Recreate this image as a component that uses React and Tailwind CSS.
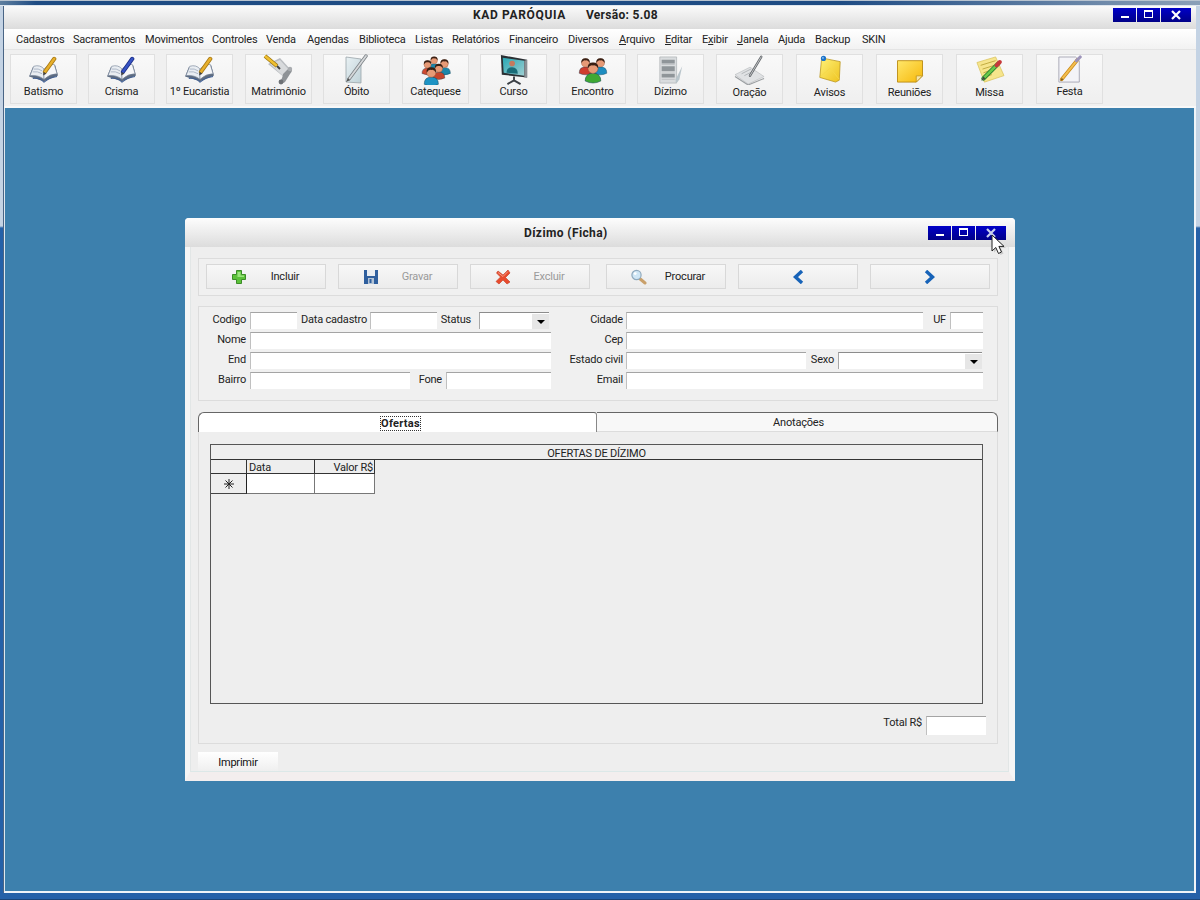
import React from "react";

const FONT = "font-['Roboto','Liberation_Sans',sans-serif]";

const Book = ({ pen = "#e8b02c", dark = "#a87a16" }) => (
  <svg width="34" height="28" viewBox="0 0 34 30">
    <path d="M1 22 L5 12 L17 15 L29 10 L32 21 L17 27 Z" fill="#5d6b80" />
    <path d="M2 21 L6 11 Q13 9 17 14 L17 25 Q11 20 2 21 Z" fill="#e9edf2" stroke="#78859a" strokeWidth=".7" />
    <path d="M17 14 Q21 9 28 9 L31 19 Q23 19 17 25 Z" fill="#f6f7f9" stroke="#78859a" strokeWidth=".7" />
    <path d="M6 14 Q11 13 15 16 M5 17 Q10 16 15 19" stroke="#a9b4c4" strokeWidth="1" fill="none" />
    <path d="M18 17 L28 3" stroke={dark} strokeWidth="4.4" strokeLinecap="round" />
    <path d="M18 17 L28 3" stroke={pen} strokeWidth="2.6" strokeLinecap="round" />
    <path d="M16 21 L16.6 17 L19.6 19 Z" fill="#444" />
    <path d="M5 24 Q12 23 17 28 Q23 23 31 22" stroke="#3f5e92" strokeWidth="1.2" fill="none" />
  </svg>
);

const Scroll = () => (
  <svg width="32" height="32" viewBox="0 0 32 32">
    <path d="M5 10 L17 4 L28 16 L22 24 Z" fill="#b9bcc0" />
    <path d="M7 10 L17 6 L26 16 L20 22 Z" fill="#d8dadc" />
    <path d="M20 20 L27 13 Q31 16 27 20 L22 28 Q18 31 16 27 Q19 27 20 20 Z" fill="#8f9397" />
    <circle cx="18" cy="28" r="2.4" fill="#6d7175" />
    <circle cx="27" cy="15" r="2.2" fill="#a9acb0" />
    <path d="M2 2 L14 12" stroke="#9a7410" strokeWidth="4" />
    <path d="M2 2 L14 12" stroke="#f0c030" strokeWidth="2.4" />
    <path d="M14 12 L17 15" stroke="#444" strokeWidth="2" />
  </svg>
);

const Obito = () => (
  <svg width="30" height="32" viewBox="0 0 30 32">
    <defs>
      <linearGradient id="ob" x1="0" y1="0" x2="1" y2="1">
        <stop offset="0" stopColor="#e9f1f4" />
        <stop offset="1" stopColor="#bfd2d8" />
      </linearGradient>
    </defs>
    <path d="M4 3 L19 5 L19 29 L4 28 Z" fill="url(#ob)" stroke="#9aa5aa" strokeWidth=".8" />
    <path d="M7 25 L24 2" stroke="#7c8286" strokeWidth="3.4" strokeLinecap="round" />
    <path d="M7 25 L24 2" stroke="#d5d8da" strokeWidth="1.8" strokeLinecap="round" />
    <path d="M4 28 L6 24 L8 26 Z" fill="#555" />
  </svg>
);

const Person = ({ x, y, s = 1, shirt = "#1f8cc0", hair = "#3a2014" }) => (
  <g transform={`translate(${x} ${y}) scale(${s})`}>
    <path d="M-8 17 Q-8 9 0 9 Q8 9 8 17 Q0 21 -8 17 Z" fill={shirt} stroke="#0f3d52" strokeWidth=".5" />
    <circle cx="0" cy="4" r="5.2" fill="#e79a76" stroke="#7a4026" strokeWidth=".4" />
    <path d="M-5.2 4 Q-6 -2 0 -2 Q6 -2 5.2 4 Q3 0 0 1 Q-3 0 -5.2 4 Z" fill={hair} />
  </g>
);

const Catequese = () => (
  <svg width="32" height="30" viewBox="0 0 34 32">
    <Person x={15} y={3} s={0.7} shirt="#1c86aa" />
    <Person x={26} y={6} s={0.8} shirt="#1c86aa" />
    <Person x={8} y={7} s={0.75} shirt="#cf4a30" />
    <Person x={20} y={11} s={0.8} shirt="#c4452c" />
    <Person x={12} y={15} s={0.95} shirt="#1d93c4" />
  </svg>
);

const Curso = () => (
  <svg width="32" height="30" viewBox="0 0 32 32">
    <defs>
      <linearGradient id="cu" x1="0" y1="0" x2="1" y2="1">
        <stop offset="0" stopColor="#2aa8b4" />
        <stop offset="1" stopColor="#9ecfd2" />
      </linearGradient>
    </defs>
    <path d="M2 0 L30 5 L30 24 L3 21 Z" fill="#2b2f33" />
    <path d="M4 3 L27 6 L27 22 L5 19 Z" fill="url(#cu)" />
    <circle cx="14" cy="9" r="3" fill="#c67a5e" />
    <path d="M8 19 Q8 13 14 13 Q20 13 20 20 Z" fill="#1a6c78" />
    <path d="M16 23 L16 27 M16 27 L9 31 M16 27 L23 31" stroke="#3b3f44" strokeWidth="2" fill="none" />
    <path d="M27 6 L30 5 L30 24 L27 24 Z" fill="#8a9095" />
  </svg>
);

const Encontro = () => (
  <svg width="32" height="28" viewBox="0 0 34 30">
    <Person x={9} y={4} s={0.85} shirt="#cf3d2e" />
    <Person x={25} y={4} s={0.85} shirt="#1d8dc0" />
    <Person x={17} y={9} s={1.05} shirt="#3ea833" />
  </svg>
);

const Dizimo = () => (
  <svg width="28" height="30" viewBox="0 0 30 32">
    <path d="M3 2 L21 2 L21 30 L3 30 Z" fill="#d9dcde" stroke="#a9adb0" strokeWidth=".7" />
    <path d="M5 5 H19 V9 H5 Z M5 12 H19 V17 H5 Z M5 20 H19 V24 H5 Z" fill="#8f9599" />
    <path d="M5 10 H19 M5 18 H19 M5 26 H19" stroke="#bcc0c3" strokeWidth="1" />
    <path d="M20 26 L27 12 L24 26 Q22 30 20 30 Z" fill="#b9c5cb" />
  </svg>
);

const Oracao = () => (
  <svg width="32" height="30" viewBox="0 0 34 32">
    <path d="M1 21 L17 13 L32 23 L15 31 Z" fill="#e0e2e4" stroke="#b8bcbf" strokeWidth=".7" />
    <path d="M1 23 L15 32 L32 25" stroke="#9a9ea1" strokeWidth="1.2" fill="none" />
    <path d="M8 20 L18 15 M11 22 L21 17" stroke="#b0b4b7" strokeWidth="1" />
    <path d="M17 22 L29 2" stroke="#63676b" strokeWidth="2.6" strokeLinecap="round" />
    <path d="M17 22 L29 2" stroke="#c7cacc" strokeWidth="1" strokeLinecap="round" />
  </svg>
);

const Avisos = () => (
  <svg width="26" height="30" viewBox="0 0 28 32">
    <defs>
      <linearGradient id="av" x1="0" y1="0" x2="1" y2="1">
        <stop offset="0" stopColor="#fff27a" />
        <stop offset="1" stopColor="#eec21e" />
      </linearGradient>
    </defs>
    <path d="M5 3 L25 7 L24 27 L20 29 L3 24 Z" fill="url(#av)" stroke="#b8921a" strokeWidth=".8" />
    <path d="M4 23 L14 14 L24 26" stroke="#f5d848" strokeWidth="1" fill="none" />
    <circle cx="7" cy="3.5" r="2.8" fill="#1d72c8" />
    <circle cx="6.4" cy="3" r="1" fill="#8cc4f0" />
  </svg>
);

const Reuniones = () => (
  <svg width="28" height="25" viewBox="0 0 30 28">
    <defs>
      <linearGradient id="re" x1="0" y1="0" x2="1" y2="1">
        <stop offset="0" stopColor="#ffe76a" />
        <stop offset="1" stopColor="#f6b80a" />
      </linearGradient>
    </defs>
    <path d="M1 3 H29 V20 L22 27 H1 Z" fill="url(#re)" stroke="#b98a10" strokeWidth="1" />
    <path d="M29 20 H22 V27 Z" fill="#f7e6a8" stroke="#b98a10" strokeWidth=".8" />
  </svg>
);

const Missa = () => (
  <svg width="30" height="28" viewBox="0 0 32 30">
    <path d="M2 7 L22 1 L31 21 L10 28 Z" fill="#f6e58c" stroke="#d9c25c" strokeWidth=".8" />
    <path d="M6 10 L22 5 M8 14 L24 9 M9 18 L20 14 M11 22 L18 20" stroke="#bda83c" strokeWidth="1" />
    <path d="M9 24 L25 8" stroke="#237e2c" strokeWidth="4.6" strokeLinecap="round" />
    <path d="M9 24 L25 8" stroke="#69c94a" strokeWidth="2.8" strokeLinecap="round" />
    <path d="M23 10 L26.5 6.5" stroke="#c7383a" strokeWidth="4.4" strokeLinecap="round" />
    <path d="M6.5 26.5 L9 22 L11 24 Z" fill="#444" />
  </svg>
);

const Festa = () => (
  <svg width="26" height="30" viewBox="0 0 28 30">
    <path d="M2 1 H20 L24 5 V28 H2 Z" fill="#f4f4f8" stroke="#a8a8b4" strokeWidth="1" />
    <path d="M5 25 L22 4" stroke="#c98a18" strokeWidth="3.8" strokeLinecap="round" />
    <path d="M5 25 L22 4" stroke="#f3bd4f" strokeWidth="2.2" strokeLinecap="round" />
    <path d="M21 5 L25 1" stroke="#9d94ba" strokeWidth="3.4" strokeLinecap="round" />
    <path d="M3.5 27 L5 23.5 L7 25 Z" fill="#7a5a20" />
  </svg>
);

const Plus = () => (
  <svg width="16" height="16" viewBox="0 0 16 16">
    <path d="M5.5 1.5 H10.5 V5.5 H14.5 V10.5 H10.5 V14.5 H5.5 V10.5 H1.5 V5.5 H5.5 Z" fill="#5cc23a" stroke="#3c8c28" strokeWidth="1" strokeLinejoin="round" />
    <path d="M6.5 3 H9.5 V6.5 H13 V8 H6.5 Z" fill="#9ae57c" />
  </svg>
);
const Floppy = () => (
  <svg width="14" height="14" viewBox="0 0 14 14">
    <path d="M0 0 H14 V14 H0 Z" fill="#2f5f9e" />
    <path d="M3 0 H11 V6 H3 Z" fill="#e9edf2" />
    <path d="M4 8 H10 V14 H4 Z" fill="#b4c4d6" />
    <path d="M5.5 9 H7.5 V13 H5.5 Z" fill="#2f5f9e" />
  </svg>
);
const RedX = () => (
  <svg width="16" height="16" viewBox="0 0 16 16">
    <path d="M3 2 L8 6 L13 1 L15 4 L10.5 8.5 L15 13 L12 15 L8 11 L4 15 L1 12.5 L5.5 8 L1.5 4 Z" fill="#e94a2c" stroke="#c03a22" strokeWidth=".6" strokeLinejoin="round" />
    <path d="M3 3.5 L8 7.5 L13 2.5" stroke="#f59a84" strokeWidth="1" fill="none" />
  </svg>
);
const Lens = () => (
  <svg width="18" height="16" viewBox="0 0 18 16">
    <path d="M9 9 L15 14" stroke="#c9a06a" strokeWidth="3" strokeLinecap="round" />
    <circle cx="6.5" cy="6" r="4.6" fill="#cfe6f5" stroke="#8fa9bd" strokeWidth="1.2" />
    <circle cx="5.2" cy="4.6" r="1.4" fill="#ffffff" />
  </svg>
);
const Chev = ({ right }) => (
  <svg width="12" height="14" viewBox="0 0 12 14">
    <path d={right ? "M2 1 L8.5 7 L2 13" : "M10 1 L3.5 7 L10 13"} fill="none" stroke="#1763b8" strokeWidth="3.4" />
  </svg>
);
const Star = () => (
  <svg width="10" height="10" viewBox="0 0 10 10">
    <path d="M5 0 V10 M0 5 H10 M1.5 1.5 L8.5 8.5 M8.5 1.5 L1.5 8.5" stroke="#222" strokeWidth="1" />
  </svg>
);

const toolbar = [
  ["Batismo", <Book />, "ml-[6px]", "mt-[1px]"],
  ["Crisma", <Book pen="#3754c4" dark="#1c2f88" />, "ml-[11px]", "mt-[1px]"],
  ["1º Eucaristia", <Book />, "ml-[11px]", "mt-[1px]"],
  ["Matrimônio", <Scroll />, "ml-[12px]", "mt-[1px]"],
  ["Óbito", <Obito />, "ml-[11px]", "mt-[1px]"],
  ["Catequese", <Catequese />, "ml-[12px]", "mt-[1px]"],
  ["Curso", <Curso />, "ml-[11px]", "mt-[1px]"],
  ["Encontro", <Encontro />, "ml-[12px]", "mt-[1px]"],
  ["Dízimo", <Dizimo />, "ml-[11px]", "mt-[1px]"],
  ["Oração", <Oracao />, "ml-[12px]", "mt-[2px]"],
  ["Avisos", <Avisos />, "ml-[13px]", "mt-[2px]"],
  ["Reuniões", <Reuniones />, "ml-[13px]", "mt-[2px]"],
  ["Missa", <Missa />, "ml-[13px]", "mt-[2px]"],
  ["Festa", <Festa />, "ml-[13px]", "mt-[1px]"],
];

const menu = [
  ["Cadastros", "w-[57px]"],
  ["Sacramentos", "w-[72px]"],
  ["Movimentos", "w-[67px]"],
  ["Controles", "w-[54px]"],
  ["Venda", "w-[41px]"],
  ["Agendas", "w-[52px]"],
  ["Biblioteca", "w-[56px]"],
  ["Listas", "w-[37px]"],
  ["Relatórios", "w-[57px]"],
  ["Financeiro", "w-[59px]"],
  ["Diversos", "w-[51px]"],
  [<><u>A</u>rquivo</>, "w-[46px]"],
  [<><u>E</u>ditar</>, "w-[37px]"],
  [<>E<u>x</u>ibir</>, "w-[35px]"],
  [<><u>J</u>anela</>, "w-[41px]"],
  ["Ajuda", "w-[37px]"],
  ["Backup", "w-[47px]"],
  ["SKIN", "w-[30px]"],
];

const WinButtons = ({ faded }) => (
  <div className="flex h-[14px] gap-[1px]">
    {[
      <span className="block w-[8px] h-[2px] mt-[7px] bg-white" />,
      <span className="block w-[9px] h-[8px] mt-[1px] border border-white border-t-2" />,
      <svg width="10" height="10" viewBox="0 0 10 10" className="mt-[1px]">
        <path d="M1 1 L9 9 M9 1 L1 9" stroke={faded ? "#c8d0f0" : "#ffffff"} strokeWidth="2.2" />
      </svg>,
    ].map((g, i) => (
      <div
        key={i}
        className={`${i === 2 ? "w-[30px]" : "w-[23px]"} h-[14px] flex justify-center items-start pt-[1px] bg-[linear-gradient(to_bottom,#0000c8,#000088)]`}
      >
        {g}
      </div>
    ))}
  </div>
);

const Input = ({ w }) => (
  <div className={`${w} h-[17px] shrink-0 bg-white border-t border-l border-t-[#a4a4a4] border-l-[#c0c0c0]`} />
);

const Combo = ({ w }) => (
  <div className={`${w} h-[17px] shrink-0 bg-white border-t border-l border-t-[#8c8c8c] border-l-[#a8a8a8] flex justify-end`}>
    <div className="w-[17px] h-[15px] mt-[1px] bg-[#e6e6e6] flex items-center justify-center">
      <span className="block w-0 h-0 border-x-[4px] border-x-transparent border-t-[4px] border-t-black" />
    </div>
  </div>
);

const Label = ({ w, children }) => (
  <div className={`${w} h-[17px] shrink-0 pt-[1px] text-right leading-[14px] whitespace-nowrap text-[#222]`}>{children}</div>
);

const DlgBtn = ({ icon, text, dim, ml }) => (
  <div className={`w-[120px] ${ml} h-[25px] border border-[#d8d8d8] bg-[linear-gradient(to_bottom,#f7f7f7,#ececec)] flex items-center`}>
    <div className="w-[41px] pl-[23px] shrink-0 flex justify-center">{icon}</div>
    <div className={`w-[74px] pt-[2px] text-center ${dim ? "text-[#9a9a9a]" : "text-[#222]"}`}>{text}</div>
  </div>
);

const NavBtn = ({ ml, right }) => (
  <div className={`w-[120px] ${ml} h-[25px] border border-[#d8d8d8] bg-[linear-gradient(to_bottom,#f7f7f7,#ececec)] flex items-center justify-center`}>
    <Chev right={right} />
  </div>
);

export default function App() {
  return (
    <div className={`relative w-[1200px] h-[900px] overflow-hidden flex flex-col text-[11px] tracking-[-0.2px] text-[#111] ${FONT}`}>
      <div className="h-[6px] shrink-0 bg-[linear-gradient(to_right,#5f7f9f_0,#1f4c84_3%,#1f4c84_70%,#8ba0b8_100%)] border-t border-t-[#b9c4d0] border-b border-b-[#dfe6ee]" />
      <div className="flex-1 flex min-h-0 bg-[linear-gradient(to_bottom,#c4d3e4_0,#c4d3e4_220px,#2561a8_222px,#2561a8_100%)]">
        <div className="w-[4px] shrink-0 border-r border-r-[#4a6585]" />
        <div className="flex-1 flex flex-col min-w-0">
          <div className="h-[23px] shrink-0 relative flex items-start justify-end pt-[2px] pr-[5px] bg-[linear-gradient(to_bottom,#fafafa,#dcdcdc)]">
            <div className="absolute left-[469px] top-[2px] flex whitespace-pre text-[12px] leading-[14px] font-bold text-[#222]">
              <span className="tracking-[0.65px]">KAD PARÓQUIA</span>
              <span className="ml-[20px] tracking-[0.3px]">Versão: 5.08</span>
            </div>
            <WinButtons />
          </div>
          <div className="h-[21px] shrink-0 flex items-center pl-[12px] pt-[2px] bg-[linear-gradient(to_bottom,#ffffff,#f2f2f2)] border-b border-b-[#e4e4e4]">
            {menu.map(([t, w], i) => (
              <div key={i} className={`${w} whitespace-nowrap leading-[16px] text-[#222]`}>{t}</div>
            ))}
          </div>
          <div className="h-[58px] shrink-0 flex pt-[4px] bg-[#f0f0f0] border-b-2 border-b-[#f8f8f8]">
            {toolbar.map(([label, icon, ml, lab], i) => (
              <div key={i} className={`${ml} w-[67px] h-[50px] shrink-0 border border-[#e0e0e0] bg-[linear-gradient(to_bottom,#f9f9f9,#efefef)] flex flex-col items-center`}>
                <div className="h-[28px] mt-[1px] flex items-center justify-center">{icon}</div>
                <div className={`${lab} leading-[14px] whitespace-nowrap text-[#222]`}>{label}</div>
              </div>
            ))}
          </div>
          <div className="flex-1 min-h-0 bg-[#3d80ad] border-l border-l-[#dfe8f0] border-r-2 border-r-[#f0f4f8] border-b-2 border-b-[#f0f4f8] pl-[180px] pt-[110px]">
            <div className="w-[830px] h-[563px] rounded-t-[4px] bg-[#f4f4f4] flex flex-col">
              <div className="h-[29px] shrink-0 rounded-t-[4px] relative flex items-center justify-end pr-[9px] pt-[1px] bg-[linear-gradient(to_bottom,#fdfdfd,#dcdcdc)]">
                <div className="absolute left-[339px] top-[8px] text-[12px] leading-[14px] font-bold tracking-[0.4px] text-[#222]">Dízimo (Ficha)</div>
                <WinButtons faded />
              </div>
              <div className="flex-1 min-h-0 flex flex-col border-l-[5px] border-r-[6px] border-b-[9px] border-x-[#f5f5f5] border-b-[#f3eeee]">
                <div className="flex-1 min-h-0 flex flex-col pl-[7px] bg-[#eeeeee] border-x border-b border-x-[#e2e6e6] border-b-[#dce8e8]">
                  <div className="w-[800px] h-[38px] mt-[11px] shrink-0 border border-[#dcdcdc] bg-[#f0f0f0] flex pt-[5px] pl-[7px]">
                    <DlgBtn icon={<Plus />} text="Incluir" />
                    <DlgBtn icon={<Floppy />} text="Gravar" dim ml="ml-[12px]" />
                    <DlgBtn icon={<RedX />} text="Excluir" dim ml="ml-[12px]" />
                    <DlgBtn icon={<Lens />} text="Procurar" ml="ml-[16px]" />
                    <NavBtn ml="ml-[12px]" />
                    <NavBtn ml="ml-[12px]" right />
                  </div>
                  <div className="w-[800px] h-[95px] mt-[10px] shrink-0 border border-[#dcdcdc] bg-[#f0f0f0] pt-[5px] flex">
                    <div className="w-[352px] shrink-0 flex flex-col gap-[3px]">
                      <div className="flex">
                        <Label w="w-[51px] pr-[4px]">Codigo</Label>
                        <Input w="w-[47px]" />
                        <Label w="w-[73px] pr-[3px]">Data cadastro</Label>
                        <Input w="w-[67px]" />
                        <Label w="w-[42px] pr-[8px]">Status</Label>
                        <Combo w="w-[70px]" />
                      </div>
                      <div className="flex">
                        <Label w="w-[51px] pr-[4px]">Nome</Label>
                        <Input w="w-[301px]" />
                      </div>
                      <div className="flex">
                        <Label w="w-[51px] pr-[4px]">End</Label>
                        <Input w="w-[301px]" />
                      </div>
                      <div className="flex">
                        <Label w="w-[51px] pr-[4px]">Bairro</Label>
                        <Input w="w-[160px]" />
                        <Label w="w-[36px] pr-[4px]">Fone</Label>
                        <Input w="w-[105px]" />
                      </div>
                    </div>
                    <div className="flex-1 flex flex-col gap-[3px]">
                      <div className="flex">
                        <Label w="w-[75px] pr-[3px]">Cidade</Label>
                        <Input w="w-[297px]" />
                        <Label w="w-[27px] pr-[4px]">UF</Label>
                        <Input w="w-[33px]" />
                      </div>
                      <div className="flex">
                        <Label w="w-[75px] pr-[3px]">Cep</Label>
                        <Input w="w-[357px]" />
                      </div>
                      <div className="flex">
                        <Label w="w-[75px] pr-[3px]">Estado civil</Label>
                        <Input w="w-[180px]" />
                        <Label w="w-[32px] pr-[4px]">Sexo</Label>
                        <Combo w="w-[144px]" />
                      </div>
                      <div className="flex">
                        <Label w="w-[75px] pr-[3px]">Email</Label>
                        <Input w="w-[357px]" />
                      </div>
                    </div>
                  </div>
                  <div className="w-[800px] h-[20px] mt-[11px] shrink-0 flex">
                    <div className="w-[399px] border-t border-l border-r border-[#666] border-r-[#888] rounded-tl-[6px] rounded-tr-[3px] bg-white flex items-center justify-center pl-[6px] pt-[1px]">
                      <span className="font-bold leading-[13px] tracking-[0.3px] outline-1 outline-dotted outline-[#333] text-[#222]">Ofertas</span>
                    </div>
                    <div className="w-[401px] border-t border-r border-[#666] rounded-tr-[6px] bg-[#f8f8f8] border-b border-b-[#dcdcdc] flex items-center justify-center pl-[3px] pt-[3px] text-[#222]">Anotações</div>
                  </div>
                  <div className="w-[800px] h-[312px] shrink-0 border-x border-b border-[#dcdcdc] bg-[#eeeeee] pt-[12px] pl-[11px]">
                    <div className="w-[773px] h-[260px] border border-[#555] bg-[#eeeeee]">
                      <div className="h-[15px] border-b border-b-[#333] text-center pt-[1px] leading-[15px] text-[#222]">OFERTAS DE DÍZIMO</div>
                      <div className="flex h-[14px] w-[164px]">
                        <div className="w-[36px] border-r border-b border-[#333]" />
                        <div className="w-[68px] border-r border-b border-[#333] pl-[2px] pt-[1px] leading-[14px] text-[#222]">Data</div>
                        <div className="w-[60px] border-r border-b border-[#333] text-right pr-[1px] pt-[1px] leading-[14px] text-[#222]">Valor R$</div>
                      </div>
                      <div className="flex h-[20px] w-[164px]">
                        <div className="w-[36px] border-r border-b border-[#444] border-r-[#222] flex items-center justify-center"><Star /></div>
                        <div className="w-[68px] bg-white border-r border-b border-[#777]" />
                        <div className="w-[60px] bg-white border-r border-b border-[#777]" />
                      </div>
                    </div>
                    <div className="flex mt-[12px] justify-end w-[776px] h-[19px]">
                      <div className="leading-[14px] pr-[4px] text-[#222]">Total R$</div>
                      <Input w="w-[60px] h-[19px]" />
                    </div>
                  </div>
                  <div className="w-[80px] h-[19px] mt-[8px] shrink-0 pt-[3px] bg-[linear-gradient(to_bottom,#ffffff,#efefef)] flex items-center justify-center text-[#111]">Imprimir</div>
                </div>
              </div>
            </div>
          </div>
        </div>
        <div className="w-[4px] shrink-0" />
      </div>
      <div className="h-[7px] shrink-0 bg-[linear-gradient(to_bottom,#2561a8_0,#2561a8_80%,#16365e_100%)]" />
      <svg className="absolute left-[990px] top-[234px]" width="16" height="22" viewBox="0 0 16 22">
        <path d="M2.5 1 L2.5 17 L6.3 13.5 L9 19.5 L12 18 L9.4 12.4 L14.5 12.4 Z" fill="#8a8a8a" opacity=".35" transform="translate(1.5 1.5)" />
        <path d="M2 1 L2 17 L5.8 13.5 L8.5 19.5 L11.5 18 L8.9 12.4 L14 12.4 Z" fill="#ffffff" stroke="#222" strokeWidth="1" strokeLinejoin="round" />
      </svg>
    </div>
  );
}
